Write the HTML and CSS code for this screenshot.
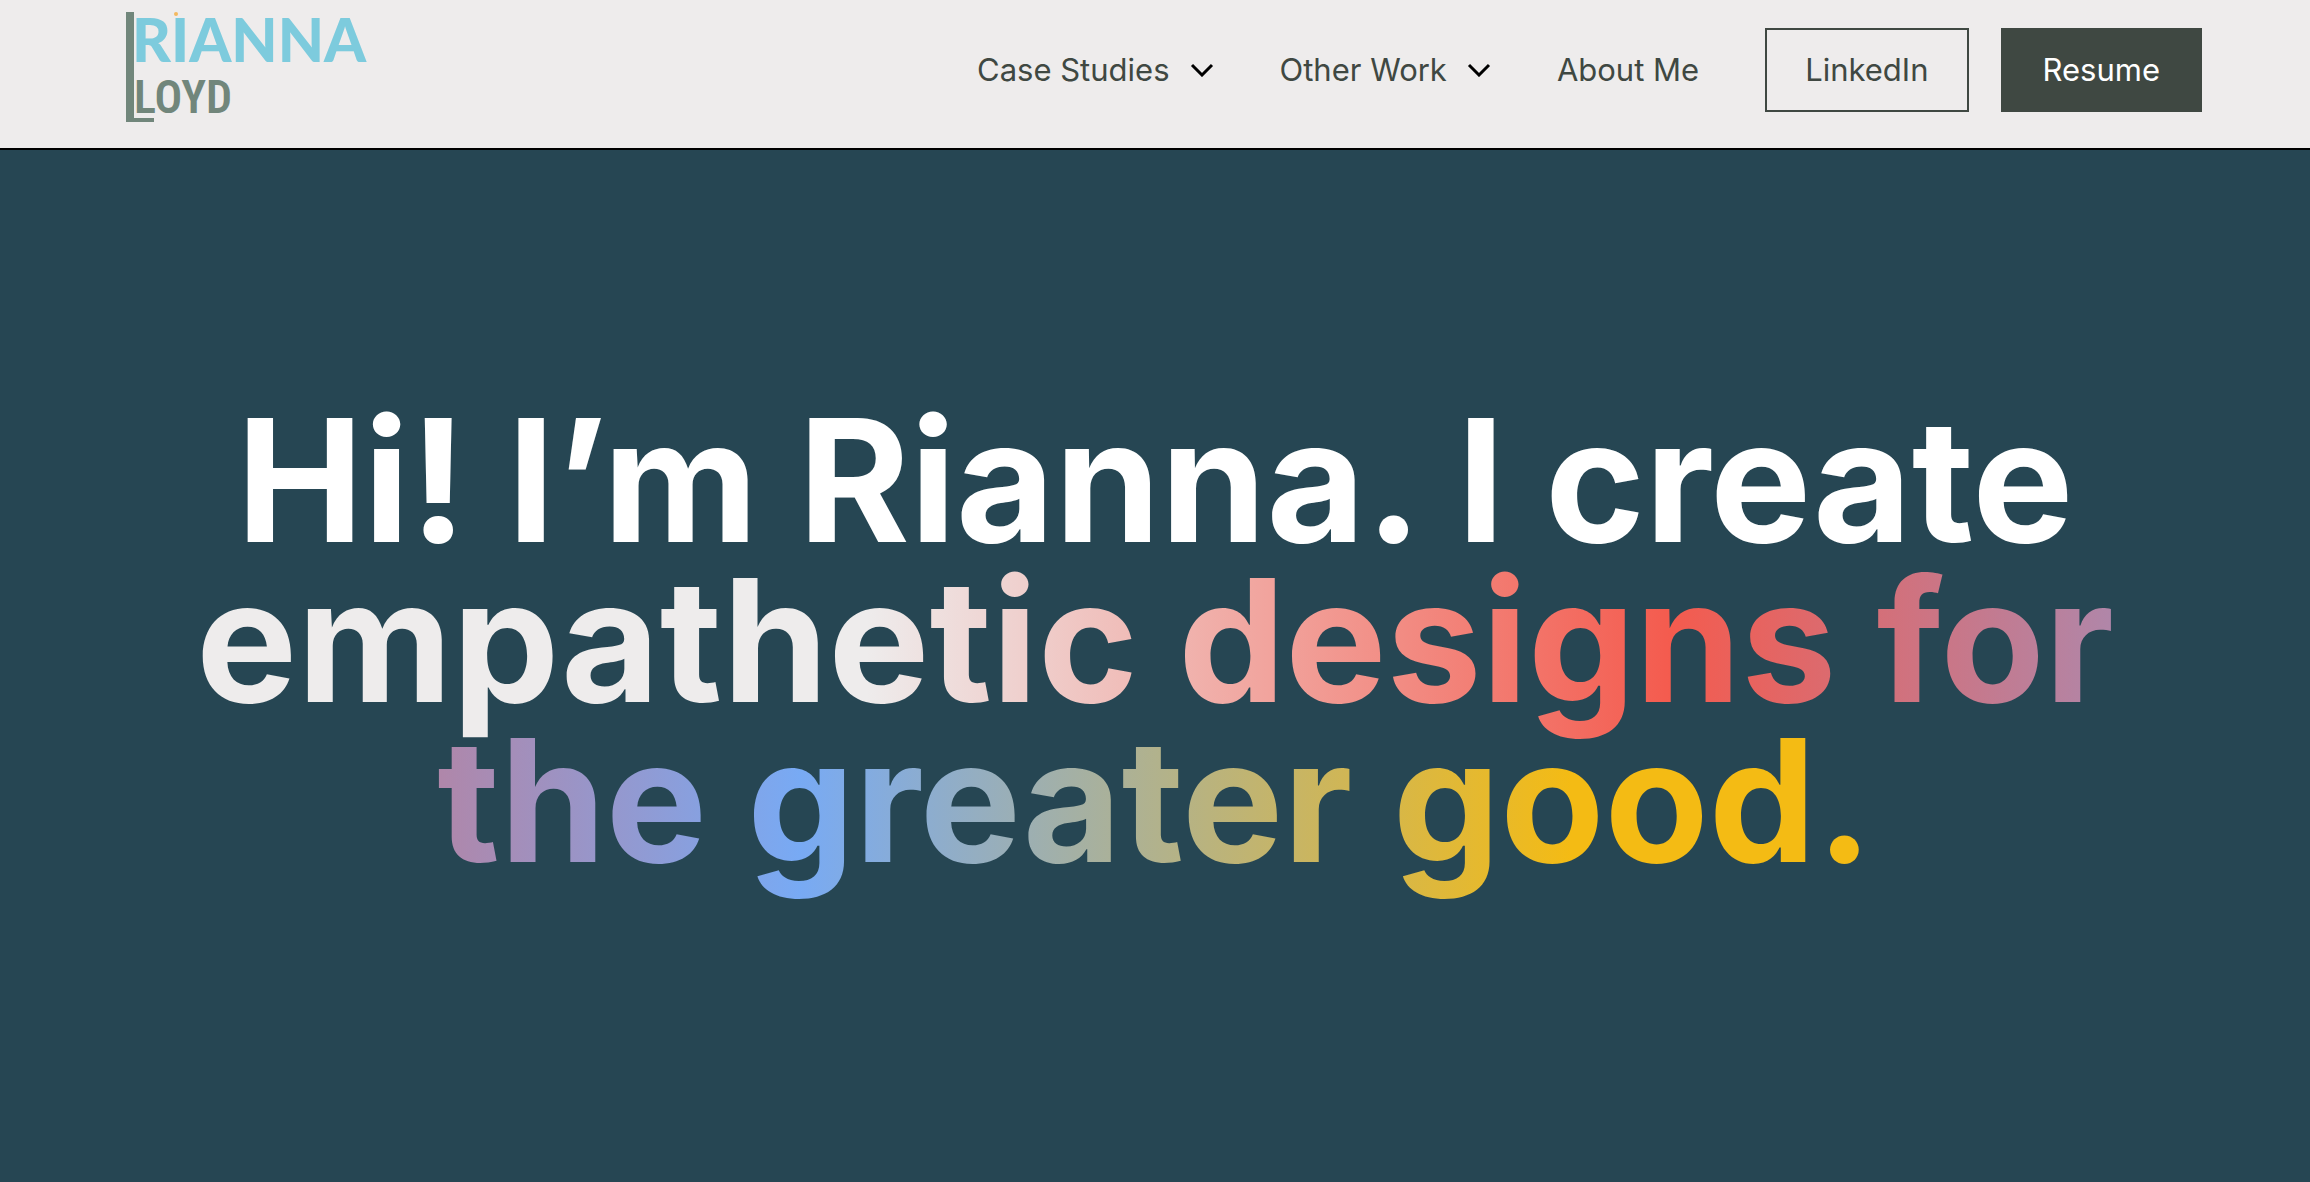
FILE: index.html
```html
<!DOCTYPE html>
<html lang="en">
<head>
<meta charset="utf-8">
<meta name="viewport" content="width=device-width, initial-scale=1">
<title>Rianna Lloyd</title>
<link rel="stylesheet" href="styles.css">
</head>
<body>
<header class="navbar">
  <a href="#" class="logo" aria-label="Rianna Lloyd">
    <svg width="240" height="110" viewBox="0 0 240 110">
      <path class="logo-bar" d="M0 0h8v106h20v4H0z"/>
      <text class="logo-first" x="6" y="50">RIANNA</text>
      <circle class="logo-dot" cx="50" cy="2" r="2"/>
      <text class="logo-last" x="8" y="101">LOYD</text>
    </svg>
  </a>
  <nav class="nav-menu">
    <button type="button" class="nav-link dropdown">Case Studies
      <svg class="chevron" width="24" height="14" viewBox="0 0 24 14"><path d="M2 2l10 10L22 2"/></svg>
    </button>
    <button type="button" class="nav-link dropdown">Other Work
      <svg class="chevron" width="24" height="14" viewBox="0 0 24 14"><path d="M2 2l10 10L22 2"/></svg>
    </button>
    <a href="#" class="nav-link">About Me</a>
    <div class="nav-buttons">
      <a href="#" class="button secondary">LinkedIn</a>
      <a href="#" class="button">Resume</a>
    </div>
  </nav>
</header>
<main class="hero">
  <h1>Hi! I’m Rianna. I create<br><span class="gradient-text">empathetic designs for<br>the greater good.</span></h1>
</main>
</body>
</html>
```

FILE: styles.css
```css
:root {
  --light: #eeecec;
  --dark: #3f4842;
  --navy: #264653;
  --sage: #71867b;
  --sky: #7dcbdd;
}
* { box-sizing: border-box; }
body {
  margin: 0;
  min-height: 100vh;
  display: flex;
  flex-direction: column;
  font-family: Inter, sans-serif;
  color: var(--dark);
  background: var(--navy);
}
.navbar {
  display: flex;
  justify-content: space-between;
  align-items: flex-start;
  padding: 12px 108px 26px 126px;
  background: var(--light);
  border-bottom: 2px solid #000;
}
.logo svg { display: block; overflow: visible; }
.logo-bar, .logo-last { fill: var(--sage); }
.logo-first {
  fill: var(--sky);
  font-family: Lato, sans-serif;
  font-size: 60px;
  font-weight: 900;
}
.logo-last {
  font-family: "Roboto Condensed", "Liberation Sans Narrow", sans-serif;
  font-size: 46px;
  font-weight: 600;
}
.logo-dot { fill: #f4b95f; }
.nav-menu {
  display: flex;
  align-items: center;
  gap: 66px;
  padding-top: 16px;
}
.nav-link, .button {
  font-family: inherit;
  font-size: 31px;
  line-height: 40px;
  text-decoration: none;
  white-space: nowrap;
}
.nav-link {
  padding: 0;
  border: none;
  background: none;
  color: var(--dark);
  cursor: pointer;
}
.dropdown {
  display: flex;
  align-items: center;
  gap: 20px;
}
.chevron {
  fill: none;
  stroke: #000;
  stroke-width: 3;
}
.nav-buttons { display: flex; gap: 32px; }
.button {
  padding: 20px 40px;
  border: 2px solid var(--dark);
  background: var(--dark);
  color: #fff;
}
.button.secondary {
  padding: 20px 38px;
  background: transparent;
  color: var(--dark);
}
.hero {
  flex: 1;
  padding: 250px 40px 0;
}
h1 {
  margin: 0;
  color: #fff;
  font-size: 170px;
  line-height: 160px;
  font-weight: 700;
  text-align: center;
}
.gradient-text {
  background: linear-gradient(90deg, #eeecec 20%, #f45b4e 44%, #78aaf4 68%, #f4bb14 91%);
  -webkit-background-clip: text;
  background-clip: text;
  color: transparent;
}
```
